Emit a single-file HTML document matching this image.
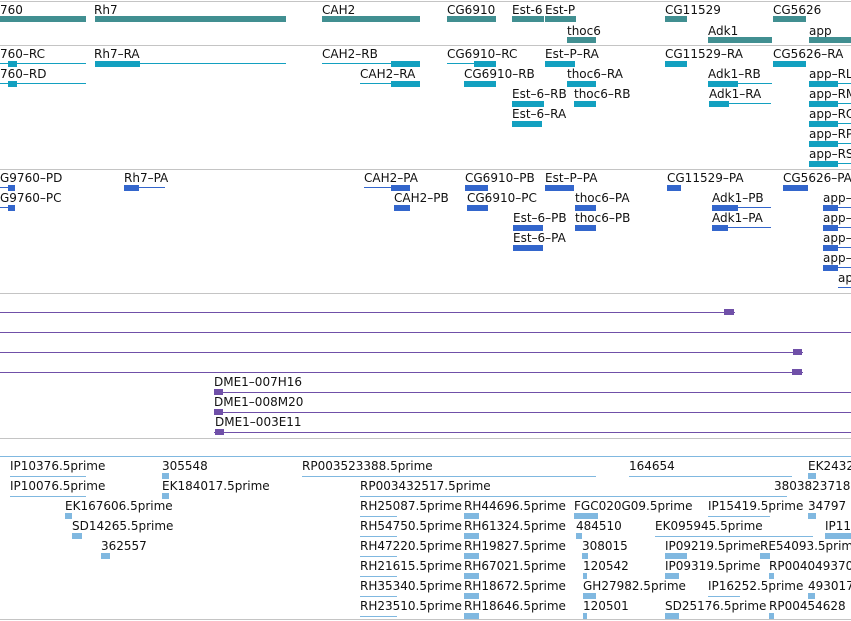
<!DOCTYPE html>
<html><head><meta charset="utf-8"><style>
body{margin:0;width:851px;height:621px;overflow:hidden;background:#fff;position:relative;font-family:"DejaVu Sans","Liberation Sans",sans-serif}
div{position:absolute}
.t{font-size:12px;line-height:14px;color:#111;white-space:nowrap}
.g{background:#418f91;height:6px}
.r{background:#13a0c0}
.p{background:#3366cc}
.u{background:#7050a8}
.e{background:#80b8e0}
.l{height:1px}
.k{height:6px}
.s{left:0;width:851px;height:1px;background:#c4c4c4}
</style></head><body>
<div class="s" style="top:1px"></div>
<div class="s" style="top:45px"></div>
<div class="s" style="top:169px"></div>
<div class="s" style="top:293px"></div>
<div class="s" style="top:438px"></div>
<div class="s" style="top:456px;background:#80b8e0"></div>
<div class="s" style="top:619px"></div>

<!-- genes -->
<div class="t" style="left:0;top:3px">760</div><div class="g" style="left:0;top:16px;width:86px"></div>
<div class="t" style="left:94px;top:3px">Rh7</div><div class="g" style="left:95px;top:16px;width:191px"></div>
<div class="t" style="left:322px;top:3px">CAH2</div><div class="g" style="left:322px;top:16px;width:98px"></div>
<div class="t" style="left:447px;top:3px">CG6910</div><div class="g" style="left:447px;top:16px;width:49px"></div>
<div class="t" style="left:512px;top:3px">Est-6</div><div class="g" style="left:512px;top:16px;width:32px"></div>
<div class="t" style="left:545px;top:3px">Est-P</div><div class="g" style="left:545px;top:16px;width:31px"></div>
<div class="t" style="left:665px;top:3px">CG11529</div><div class="g" style="left:665px;top:16px;width:22px"></div>
<div class="t" style="left:773px;top:3px">CG5626</div><div class="g" style="left:773px;top:16px;width:33px"></div>
<div class="t" style="left:567px;top:24px">thoc6</div><div class="g" style="left:567px;top:37px;width:29px"></div>
<div class="t" style="left:708px;top:24px">Adk1</div><div class="g" style="left:708px;top:37px;width:64px"></div>
<div class="t" style="left:809px;top:24px">app</div><div class="g" style="left:809px;top:37px;width:42px"></div>

<!-- transcripts -->
<div class="t" style="left:0;top:47px">760–RC</div><div class="r l" style="left:0;top:63px;width:86px"></div><div class="r k" style="left:8px;top:61px;width:9px"></div>
<div class="t" style="left:94px;top:47px">Rh7–RA</div><div class="r l" style="left:95px;top:63px;width:191px"></div><div class="r k" style="left:95px;top:61px;width:45px"></div>
<div class="t" style="left:322px;top:47px">CAH2–RB</div><div class="r l" style="left:322px;top:63px;width:98px"></div><div class="r k" style="left:391px;top:61px;width:29px"></div>
<div class="t" style="left:447px;top:47px">CG6910–RC</div><div class="r l" style="left:447px;top:63px;width:49px"></div><div class="r k" style="left:474px;top:61px;width:22px"></div>
<div class="t" style="left:545px;top:47px">Est–P–RA</div><div class="r k" style="left:545px;top:61px;width:30px"></div>
<div class="t" style="left:665px;top:47px">CG11529–RA</div><div class="r k" style="left:665px;top:61px;width:22px"></div>
<div class="t" style="left:773px;top:47px">CG5626–RA</div><div class="r k" style="left:773px;top:61px;width:33px"></div>
<div class="t" style="left:0;top:67px">760–RD</div><div class="r l" style="left:0;top:83px;width:86px"></div><div class="r k" style="left:8px;top:81px;width:9px"></div>
<div class="t" style="left:360px;top:67px">CAH2–RA</div><div class="r l" style="left:360px;top:83px;width:60px"></div><div class="r k" style="left:391px;top:81px;width:29px"></div>
<div class="t" style="left:464px;top:67px">CG6910–RB</div><div class="r k" style="left:464px;top:81px;width:32px"></div>
<div class="t" style="left:567px;top:67px">thoc6–RA</div><div class="r k" style="left:567px;top:81px;width:29px"></div>
<div class="t" style="left:708px;top:67px">Adk1–RB</div><div class="r l" style="left:708px;top:83px;width:64px"></div><div class="r k" style="left:708px;top:81px;width:30px"></div>
<div class="t" style="left:809px;top:67px">app–RL</div><div class="r l" style="left:809px;top:83px;width:42px"></div><div class="r k" style="left:809px;top:81px;width:29px"></div>
<div class="t" style="left:512px;top:87px">Est–6–RB</div><div class="r k" style="left:512px;top:101px;width:32px"></div>
<div class="t" style="left:574px;top:87px">thoc6–RB</div><div class="r k" style="left:574px;top:101px;width:22px"></div>
<div class="t" style="left:709px;top:87px">Adk1–RA</div><div class="r l" style="left:709px;top:103px;width:62px"></div><div class="r k" style="left:709px;top:101px;width:20px"></div>
<div class="t" style="left:809px;top:87px">app–RM</div><div class="r l" style="left:809px;top:103px;width:42px"></div><div class="r k" style="left:809px;top:101px;width:29px"></div>
<div class="t" style="left:512px;top:107px">Est–6–RA</div><div class="r k" style="left:512px;top:121px;width:30px"></div>
<div class="t" style="left:809px;top:107px">app–RO</div><div class="r l" style="left:809px;top:123px;width:42px"></div><div class="r k" style="left:809px;top:121px;width:29px"></div>
<div class="t" style="left:809px;top:127px">app–RP</div><div class="r l" style="left:809px;top:143px;width:42px"></div><div class="r k" style="left:809px;top:141px;width:29px"></div>
<div class="t" style="left:809px;top:147px">app–RS</div><div class="r l" style="left:809px;top:163px;width:42px"></div><div class="r k" style="left:809px;top:161px;width:29px"></div>

<!-- proteins -->
<div class="t" style="left:0;top:171px">G9760–PD</div><div class="p l" style="left:0;top:187px;width:15px"></div><div class="p k" style="left:8px;top:185px;width:7px"></div>
<div class="t" style="left:124px;top:171px">Rh7–PA</div><div class="p l" style="left:124px;top:187px;width:41px"></div><div class="p k" style="left:124px;top:185px;width:15px"></div>
<div class="t" style="left:364px;top:171px">CAH2–PA</div><div class="p l" style="left:364px;top:187px;width:46px"></div><div class="p k" style="left:391px;top:185px;width:19px"></div>
<div class="t" style="left:465px;top:171px">CG6910–PB</div><div class="p k" style="left:465px;top:185px;width:23px"></div>
<div class="t" style="left:545px;top:171px">Est–P–PA</div><div class="p k" style="left:545px;top:185px;width:29px"></div>
<div class="t" style="left:667px;top:171px">CG11529–PA</div><div class="p k" style="left:667px;top:185px;width:14px"></div>
<div class="t" style="left:783px;top:171px">CG5626–PA</div><div class="p k" style="left:783px;top:185px;width:25px"></div>
<div class="t" style="left:0;top:191px">G9760–PC</div><div class="p l" style="left:0;top:207px;width:15px"></div><div class="p k" style="left:8px;top:205px;width:7px"></div>
<div class="t" style="left:394px;top:191px">CAH2–PB</div><div class="p k" style="left:394px;top:205px;width:16px"></div>
<div class="t" style="left:467px;top:191px">CG6910–PC</div><div class="p k" style="left:467px;top:205px;width:21px"></div>
<div class="t" style="left:575px;top:191px">thoc6–PA</div><div class="p k" style="left:575px;top:205px;width:21px"></div>
<div class="t" style="left:712px;top:191px">Adk1–PB</div><div class="p l" style="left:712px;top:207px;width:59px"></div><div class="p k" style="left:712px;top:205px;width:26px"></div>
<div class="t" style="left:823px;top:191px">app–</div><div class="p l" style="left:823px;top:207px;width:28px"></div><div class="p k" style="left:823px;top:205px;width:15px"></div>
<div class="t" style="left:513px;top:211px">Est–6–PB</div><div class="p k" style="left:513px;top:225px;width:30px"></div>
<div class="t" style="left:575px;top:211px">thoc6–PB</div><div class="p k" style="left:575px;top:225px;width:21px"></div>
<div class="t" style="left:712px;top:211px">Adk1–PA</div><div class="p l" style="left:712px;top:227px;width:59px"></div><div class="p k" style="left:712px;top:225px;width:16px"></div>
<div class="t" style="left:823px;top:211px">app–</div><div class="p l" style="left:823px;top:227px;width:28px"></div><div class="p k" style="left:823px;top:225px;width:15px"></div>
<div class="t" style="left:513px;top:231px">Est–6–PA</div><div class="p k" style="left:513px;top:245px;width:30px"></div>
<div class="t" style="left:823px;top:231px">app–</div><div class="p l" style="left:823px;top:247px;width:28px"></div><div class="p k" style="left:823px;top:245px;width:15px"></div>
<div class="t" style="left:823px;top:251px">app–</div><div class="p l" style="left:823px;top:267px;width:28px"></div><div class="p k" style="left:823px;top:265px;width:15px"></div>
<div class="t" style="left:838px;top:271px">ap</div><div class="p l" style="left:838px;top:287px;width:13px"></div>

<!-- purple -->
<div class="u l" style="left:0;top:312px;width:735px"></div><div class="u k" style="left:724px;top:309px;width:10px"></div>
<div class="u l" style="left:0;top:332px;width:851px"></div>
<div class="u l" style="left:0;top:352px;width:803px"></div><div class="u k" style="left:793px;top:349px;width:9px"></div>
<div class="u l" style="left:0;top:372px;width:803px"></div><div class="u k" style="left:792px;top:369px;width:10px"></div>
<div class="t" style="left:214px;top:375px">DME1–007H16</div><div class="u l" style="left:214px;top:392px;width:637px"></div><div class="u k" style="left:214px;top:389px;width:9px"></div>
<div class="t" style="left:214px;top:395px">DME1–008M20</div><div class="u l" style="left:214px;top:412px;width:637px"></div><div class="u k" style="left:214px;top:409px;width:9px"></div>
<div class="t" style="left:215px;top:415px">DME1–003E11</div><div class="u l" style="left:214px;top:432px;width:637px"></div><div class="u k" style="left:215px;top:429px;width:9px"></div>

<!-- ESTs -->
<div class="t" style="left:10px;top:459px">IP10376.5prime</div><div class="e l" style="left:10px;top:476px;width:76px"></div>
<div class="t" style="left:162px;top:459px">305548</div><div class="e k" style="left:162px;top:473px;width:7px"></div>
<div class="t" style="left:302px;top:459px">RP003523388.5prime</div><div class="e l" style="left:302px;top:476px;width:294px"></div>
<div class="t" style="left:629px;top:459px">164654</div><div class="e l" style="left:629px;top:476px;width:163px"></div>
<div class="t" style="left:808px;top:459px">EK2432</div><div class="e k" style="left:808px;top:473px;width:8px"></div>
<div class="t" style="left:10px;top:479px">IP10076.5prime</div><div class="e l" style="left:10px;top:496px;width:76px"></div>
<div class="t" style="left:162px;top:479px">EK184017.5prime</div><div class="e k" style="left:162px;top:493px;width:7px"></div>
<div class="t" style="left:360px;top:479px">RP003432517.5prime</div><div class="e l" style="left:360px;top:496px;width:427px"></div>
<div class="t" style="left:774px;top:479px">3803823718</div>
<div class="t" style="left:65px;top:499px">EK167606.5prime</div><div class="e k" style="left:65px;top:513px;width:7px"></div>
<div class="t" style="left:360px;top:499px">RH25087.5prime</div><div class="e l" style="left:360px;top:516px;width:37px"></div>
<div class="t" style="left:464px;top:499px">RH44696.5prime</div><div class="e k" style="left:464px;top:513px;width:15px"></div>
<div class="t" style="left:574px;top:499px">FGC020G09.5prime</div><div class="e k" style="left:574px;top:513px;width:24px"></div>
<div class="t" style="left:708px;top:499px">IP15419.5prime</div><div class="e l" style="left:708px;top:516px;width:62px"></div>
<div class="t" style="left:808px;top:499px">34797</div><div class="e k" style="left:808px;top:513px;width:8px"></div>
<div class="t" style="left:72px;top:519px">SD14265.5prime</div><div class="e k" style="left:72px;top:533px;width:10px"></div>
<div class="t" style="left:360px;top:519px">RH54750.5prime</div><div class="e l" style="left:360px;top:536px;width:37px"></div>
<div class="t" style="left:464px;top:519px">RH61324.5prime</div><div class="e k" style="left:464px;top:533px;width:15px"></div>
<div class="t" style="left:576px;top:519px">484510</div><div class="e k" style="left:576px;top:533px;width:6px"></div>
<div class="t" style="left:655px;top:519px">EK095945.5prime</div><div class="e l" style="left:655px;top:536px;width:158px"></div>
<div class="t" style="left:825px;top:519px">IP11</div><div class="e k" style="left:825px;top:533px;width:26px"></div>
<div class="t" style="left:101px;top:539px">362557</div><div class="e k" style="left:101px;top:553px;width:9px"></div>
<div class="t" style="left:360px;top:539px">RH47220.5prime</div><div class="e l" style="left:360px;top:556px;width:37px"></div>
<div class="t" style="left:464px;top:539px">RH19827.5prime</div><div class="e k" style="left:464px;top:553px;width:15px"></div>
<div class="t" style="left:582px;top:539px">308015</div><div class="e k" style="left:582px;top:553px;width:6px"></div>
<div class="t" style="left:665px;top:539px">IP09219.5prime</div><div class="e k" style="left:665px;top:553px;width:22px"></div>
<div class="t" style="left:760px;top:539px">RE54093.5prime</div><div class="e k" style="left:760px;top:553px;width:10px"></div>
<div class="t" style="left:360px;top:559px">RH21615.5prime</div><div class="e l" style="left:360px;top:576px;width:37px"></div>
<div class="t" style="left:464px;top:559px">RH67021.5prime</div><div class="e k" style="left:464px;top:573px;width:15px"></div>
<div class="t" style="left:583px;top:559px">120542</div><div class="e k" style="left:583px;top:573px;width:4px"></div>
<div class="t" style="left:665px;top:559px">IP09319.5prime</div><div class="e k" style="left:665px;top:573px;width:14px"></div>
<div class="t" style="left:769px;top:559px">RP004049370</div><div class="e k" style="left:769px;top:573px;width:5px"></div>
<div class="t" style="left:360px;top:579px">RH35340.5prime</div><div class="e l" style="left:360px;top:596px;width:37px"></div>
<div class="t" style="left:464px;top:579px">RH18672.5prime</div><div class="e k" style="left:464px;top:593px;width:15px"></div>
<div class="t" style="left:583px;top:579px">GH27982.5prime</div><div class="e k" style="left:583px;top:593px;width:13px"></div>
<div class="t" style="left:708px;top:579px">IP16252.5prime</div><div class="e l" style="left:708px;top:596px;width:32px"></div>
<div class="t" style="left:808px;top:579px">493017</div><div class="e k" style="left:808px;top:593px;width:7px"></div>
<div class="t" style="left:360px;top:599px">RH23510.5prime</div><div class="e l" style="left:360px;top:616px;width:37px"></div>
<div class="t" style="left:464px;top:599px">RH18646.5prime</div><div class="e k" style="left:464px;top:613px;width:15px"></div>
<div class="t" style="left:583px;top:599px">120501</div><div class="e k" style="left:583px;top:613px;width:4px"></div>
<div class="t" style="left:665px;top:599px">SD25176.5prime</div><div class="e k" style="left:665px;top:613px;width:14px"></div>
<div class="t" style="left:769px;top:599px">RP00454628</div><div class="e k" style="left:769px;top:613px;width:5px"></div>
</body></html>
